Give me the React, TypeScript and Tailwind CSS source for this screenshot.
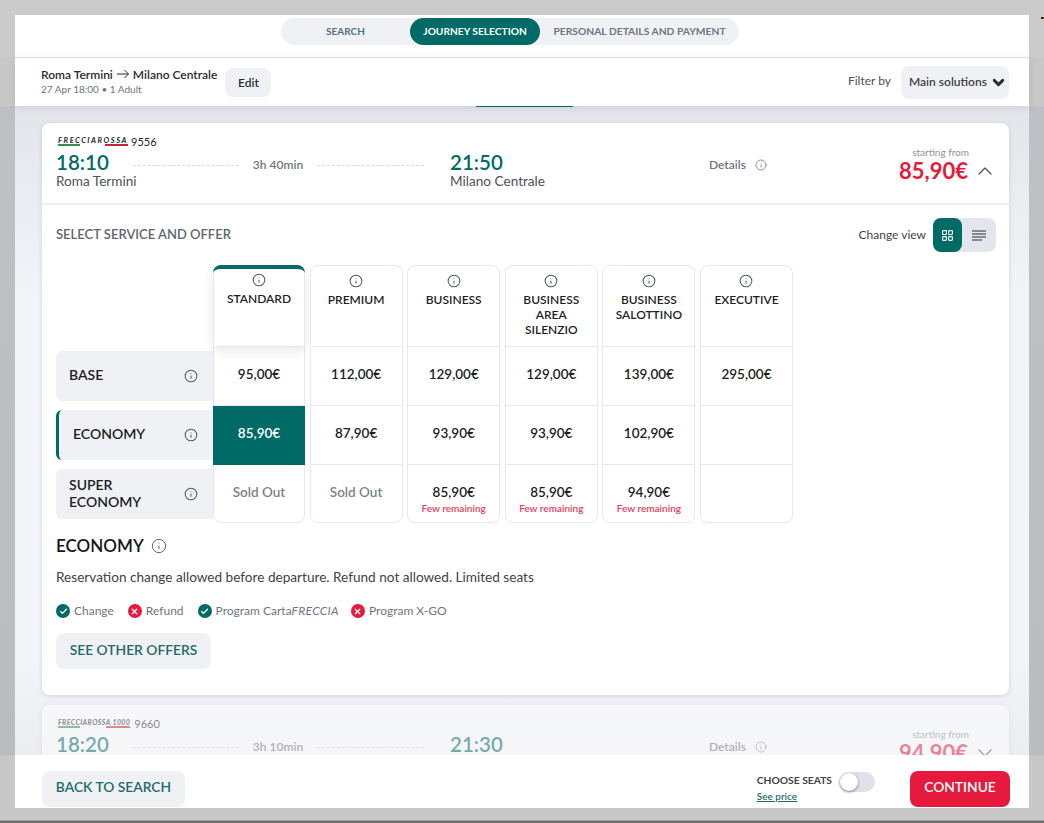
import { Check, ChevronDown, ChevronUp, Info, LayoutGrid, X } from "lucide-react";

const columns = [
  { name: "STANDARD", prices: ["95,00€", "85,90€", "Sold Out"] },
  { name: "PREMIUM", prices: ["112,00€", "87,90€", "Sold Out"] },
  { name: "BUSINESS", prices: ["129,00€", "93,90€", "85,90€"], few: true },
  { name: "BUSINESS AREA SILENZIO", prices: ["129,00€", "93,90€", "85,90€"], few: true },
  { name: "BUSINESS SALOTTINO", prices: ["139,00€", "102,90€", "94,90€"], few: true },
  { name: "EXECUTIVE", prices: ["295,00€", "", ""] },
];

function InfoIcon({ size = 14 }: { size?: number }) {
  return <Info size={size} strokeWidth={1.75} className="shrink-0 text-[#4d5a66]" />;
}

function Logo({ label, red, thousand }: { label: string; red: number; thousand?: boolean }) {
  return (
    <div className={`ml-[2px] flex flex-col ${thousand ? "pr-[1px]" : ""}`}>
      <span className={`${thousand ? "text-[7px] tracking-[0.4px]" : "text-[7.5px] tracking-[1.55px]"} leading-[7px] font-black italic text-[#30363c] whitespace-nowrap`}>{label}</span>
      <div className="flex h-[2px] justify-between">
        <span className="w-[22px] bg-[#3b8a4e]" />
        <span className="bg-[#c8233a]" style={{ width: red }} />
      </div>
    </div>
  );
}

function JourneyHead({ logo, red, number, from, duration, to, price, open, thousand }: {
  logo: string; red: number; number: string; from: string; duration: string; to: string; price: string; open?: boolean; thousand?: boolean;
}) {
  return (
    <div className="h-[80px] pl-[14px] pr-[12px] pt-[12px]">
      <div className="flex items-center gap-[3px] text-[11px] leading-[13px] text-[#1f2429]">
        <Logo label={logo} red={red} thousand={thousand} />
        <span>{number}</span>
      </div>
      <div className="mt-[2px] flex items-start">
        <div className="w-[77px] shrink-0 whitespace-nowrap">
          <div className="text-[20.5px] leading-[24px] font-semibold text-[#006a66]">{from}</div>
          <div className="text-[13.6px] leading-[15px] text-[#4b5258]">Roma Termini</div>
        </div>
        <div className="mt-[7px] flex w-[291px] shrink-0 items-center">
          <span className="w-[106px] border-t border-dashed border-[#d5d8df]" />
          <span className="w-[78px] text-center text-[12px] leading-[16px] font-semibold text-[#6d7680]">{duration}</span>
          <span className="w-[107px] border-t border-dashed border-[#d5d8df]" />
        </div>
        <div className="ml-[26px] w-[259px] shrink-0 whitespace-nowrap">
          <div className="text-[20.5px] leading-[24px] font-semibold text-[#006a66]">{to}</div>
          <div className="text-[13.6px] leading-[15px] text-[#4b5258]">Milano Centrale</div>
        </div>
        <div className="mt-[7px] flex w-[100px] shrink-0 items-center gap-[9px] text-[12px] leading-[16px] font-semibold text-[#6d7680]">
          Details <Info size={12} strokeWidth={1.5} className="text-[#6d7680]" />
        </div>
        <div className="-mt-[4px] flex flex-1 flex-col items-end">
          <div className="pr-[28px] text-[10px] leading-[12px] text-[#8b929a]">starting from</div>
          <div className="flex h-[25px] items-center gap-[5px]">
            <span className="text-[22px] leading-[25px] font-bold text-[#e51a3c]">{price}</span>
            {open ? (
              <ChevronUp size={24} strokeWidth={1.25} className="text-[#4b5258]" />
            ) : (
              <ChevronDown size={24} strokeWidth={1.25} className="text-[#4b5258]" />
            )}
          </div>
        </div>
      </div>
    </div>
  );
}

function RowLabel({ label, active }: { label: string; active?: boolean }) {
  return (
    <div className={`flex h-[50px] items-center rounded-l-md bg-[#f0f1f5] pr-[15px] ${active ? "border-l-[3px] border-[#006a66] pl-[14px]" : "pl-[13px]"}`}>
      <span className="-mt-[3px] flex-1 text-[14px] leading-[17px] font-semibold text-[#1b1f23]">{label}</span>
      <InfoIcon />
    </div>
  );
}

function Column({ col, index }: { col: (typeof columns)[number]; index: number }) {
  const selected = index === 0;
  return (
    <div className={`relative flex flex-col rounded-lg border border-[#e6e7ef] bg-white ${selected ? "w-[92px]" : "w-[93px]"}`}>
      <div className={`flex flex-col items-center border-b border-[#e6e7ef] px-1 text-center ${selected ? "-mx-[1px] -mt-[1px] h-[82px] rounded-t-lg border-t-4 border-t-[#006a66] pt-[4px] shadow-[0_4px_12px_rgba(30,40,60,0.1)]" : "h-[81px] pt-[8px]"}`}>
        <InfoIcon />
        <span className="mt-[4px] text-[12px] leading-[15px] font-semibold text-[#1b1f23]">{col.name}</span>
      </div>
      {col.prices.map((p, i) => {
        const isSelected = selected && i === 1;
        const sold = p === "Sold Out";
        return (
          <div
            key={i}
            className={`flex flex-col items-center pt-[19px] ${i === 2 ? "h-[57px]" : "h-[59px]"} ${i < 2 ? "border-b border-[#e6e7ef]" : ""} ${isSelected ? "relative z-10 -mx-[1px] border-b-0 bg-[#006a66] text-white" : sold ? "text-[#7a828a]" : "text-[#1b1f23]"} text-[13.5px] leading-[16px] font-semibold`}
          >
            <span>{p}</span>
            {col.few && i === 2 && <span className="mt-[3px] text-[10px] leading-[10px] text-[#e5405c]">Few remaining</span>}
          </div>
        );
      })}
    </div>
  );
}

function Tag({ ok, children }: { ok: boolean; children: React.ReactNode }) {
  return (
    <span className="flex items-center gap-[4px] text-[12px] leading-[14px] text-[#6d7680]">
      <span className={`flex h-[14px] w-[14px] items-center justify-center rounded-full text-white ${ok ? "bg-[#006a66]" : "bg-[#e51a3c]"}`}>
        {ok ? <Check size={9} strokeWidth={3.5} /> : <X size={9} strokeWidth={3.5} />}
      </span>
      {children}
    </span>
  );
}

export default function App() {
  return (
    <div className="relative h-[823px] w-[1044px] overflow-hidden bg-[linear-gradient(to_bottom,#cbcbcb_0,#cbcbcb_57px,#c8c8c8_58px,#c8c8c8_106px,#bfc0c3_107px,#bbbcbf_755px,#c8c8c8_756px,#c8c8c8_820px,#6f6f6f_821px)] px-[15px] pt-[15px] font-[Lato,sans-serif]">
      <span className="absolute top-[17px] right-0 h-[2px] w-[3px] bg-[#3a3020]" />
      <div className="flex h-[793px] flex-col bg-white">
        <div className="relative z-20 flex h-[43px] shrink-0 border-b border-[#dcdde0] pt-[3px] pl-[266px]">
          <div className="flex h-[27px] w-[458px] rounded-full bg-[#f0f1f5] text-[10px] font-bold">
            <span className="flex w-[129px] items-center justify-center text-[#53707a]">SEARCH</span>
            <span className="flex w-[130px] items-center justify-center rounded-full bg-[#006a66] text-[10.2px] text-white">JOURNEY SELECTION</span>
            <span className="flex w-[199px] items-center justify-center text-[10.3px] text-[#6d7680]">PERSONAL DETAILS AND PAYMENT</span>
          </div>
        </div>

        <div className="relative z-20 flex h-[48px] shrink-0 items-center justify-between bg-white pl-[26px] pr-[20px] shadow-[0_2px_8px_rgba(40,50,70,0.12)]">
          <div className="flex items-center gap-[8px]">
            <div className="-mt-[2px]">
              <div className="flex items-center gap-[3px] text-[12px] leading-[15px] font-semibold text-[#272c33]">
                Roma Termini
                <svg width="14" height="10" viewBox="0 0 14 10" fill="none" stroke="currentColor" strokeWidth="1">
                  <path d="M1 5h11.5M8.5 1l4 4-4 4" />
                </svg>
                Milano Centrale
              </div>
              <div className="mt-[1px] text-[10px] leading-[13px] text-[#6d7680]">27 Apr 18:00 • 1 Adult</div>
            </div>
            <button className="mt-[1px] h-[29px] w-[46px] rounded-lg bg-[#f0f1f5] text-[12px] font-semibold text-[#272c33]">Edit</button>
          </div>
          <div className="flex items-center gap-[10px]">
            <span className="-mt-[3px] text-[12px] text-[#4b5258]">Filter by</span>
            <div className="flex h-[33px] w-[108px] items-center gap-[3px] rounded-lg bg-[#f0f1f5] pl-[8px] text-[12px] font-semibold text-[#3c434a]">
              Main solutions
              <ChevronDown size={17} strokeWidth={4} className="text-[#272c33]" />
            </div>
          </div>
        </div>

        <div className="relative flex-1 overflow-hidden bg-[linear-gradient(to_bottom,#e4e5ea,#f3f4f8_30%,#f3f4f8_85%,#ecedf1)] pl-[27px] pr-[20px] pt-[17px]">
          <div className="absolute top-0 left-[461px] z-30 h-[1px] w-[97px] rounded-b-lg bg-[#006a66]" />
          <div className="h-[572px] rounded-lg bg-white shadow-[0_1px_4px_rgba(40,50,70,0.15)]">
            <JourneyHead logo="FRECCIAROSSA" red={23} number="9556" from="18:10" duration="3h 40min" to="21:50" price="85,90€" open />
            <div className="border-t-2 border-[#eeeff5] pl-[14px] pr-[13px]">
              <div className="flex h-[60px] items-center justify-between">
                <span className="text-[13px] font-semibold text-[#5e666e]">SELECT SERVICE AND OFFER</span>
                <div className="flex items-center gap-[7px]">
                  <span className="text-[12px] text-[#3c434a]">Change view</span>
                  <div className="flex h-[34px] w-[63px] rounded-lg bg-[#e4e6ee]">
                    <span className="flex w-[29px] items-center justify-center rounded-lg bg-[#006a66] text-white">
                      <LayoutGrid size={13} strokeWidth={2} />
                    </span>
                    <span className="flex flex-1 items-center justify-center">
                      <svg width="14" height="11" viewBox="0 0 14 11" fill="none" stroke="#272c33" strokeWidth="1.2">
                        <path d="M0 1h14M0 4h14M0 7h14M0 10h10" />
                      </svg>
                    </span>
                  </div>
                </div>
              </div>

              <div className="flex">
                <div className="flex w-[157px] flex-col gap-[9px] pt-[86px]">
                  <RowLabel label="BASE" />
                  <RowLabel label="ECONOMY" active />
                  <RowLabel label="SUPER ECONOMY" />
                </div>
                <div className="flex gap-[4.6px]">
                  {columns.map((col, i) => (
                    <Column key={col.name} col={col} index={i} />
                  ))}
                </div>
              </div>

              <div className="mt-[12px] flex items-center gap-[7px] text-[17px] leading-[22px] font-semibold text-[#14181c]">
                ECONOMY <Info size={16} strokeWidth={1.5} className="text-[#5c6670]" />
              </div>
              <p className="mt-[12px] text-[13.6px] leading-[16px] text-[#3c434a]">
                Reservation change allowed before departure. Refund not allowed. Limited seats
              </p>
              <div className="mt-[19px] flex gap-[14px]">
                <Tag ok>Change</Tag>
                <Tag ok={false}>Refund</Tag>
                <Tag ok>
                  <span>
                    Program Carta<i className="tracking-[0.3px]">FRECCIA</i>
                  </span>
                </Tag>
                <span className="-ml-[2px]">
                  <Tag ok={false}>Program X-GO</Tag>
                </span>
              </div>
              <button className="mt-[15px] h-[36px] w-[155px] rounded-lg bg-[#f0f1f5] pb-[2px] text-[13.8px] font-semibold text-[#1f6b68]">SEE OTHER OFFERS</button>
            </div>
          </div>

          <div className="mt-[10px] rounded-lg bg-white opacity-50 shadow-[0_1px_4px_rgba(40,50,70,0.15)]">
            <JourneyHead logo="FRECCIAROSSA 1000" thousand red={24} number="9660" from="18:20" duration="3h 10min" to="21:30" price="94,90€" />
          </div>
        </div>

        <div className="flex h-[53px] shrink-0 items-start justify-between bg-white pl-[27px] pr-[19px] pt-[16px]">
          <button className="h-[36px] w-[143px] rounded-lg bg-[#f0f1f5] pb-[4px] text-[13.8px] font-semibold text-[#1f6b68]">BACK TO SEARCH</button>
          <div className="flex items-start gap-[35px]">
            <div className="mt-[1px] flex flex-col">
              <div className="flex items-center gap-[7px]">
                <span className="-mt-[3px] text-[10.3px] font-bold text-[#3c434a]">CHOOSE SEATS</span>
                <span className="flex h-[20px] w-[36px] items-center rounded-full bg-[#e0e2ea] pl-[1px]">
                  <span className="h-[18px] w-[18px] rounded-full bg-white shadow-[0_1px_3px_rgba(0,0,0,0.45)]" />
                </span>
              </div>
              <span className="-mt-[1px] text-[10px] leading-[10px] font-semibold text-[#1f6b68] underline">See price</span>
            </div>
            <button className="h-[36px] w-[100px] rounded-lg bg-[#e51a3c] pb-[4px] text-[13.8px] font-semibold text-white">CONTINUE</button>
          </div>
        </div>
      </div>
    </div>
  );
}
